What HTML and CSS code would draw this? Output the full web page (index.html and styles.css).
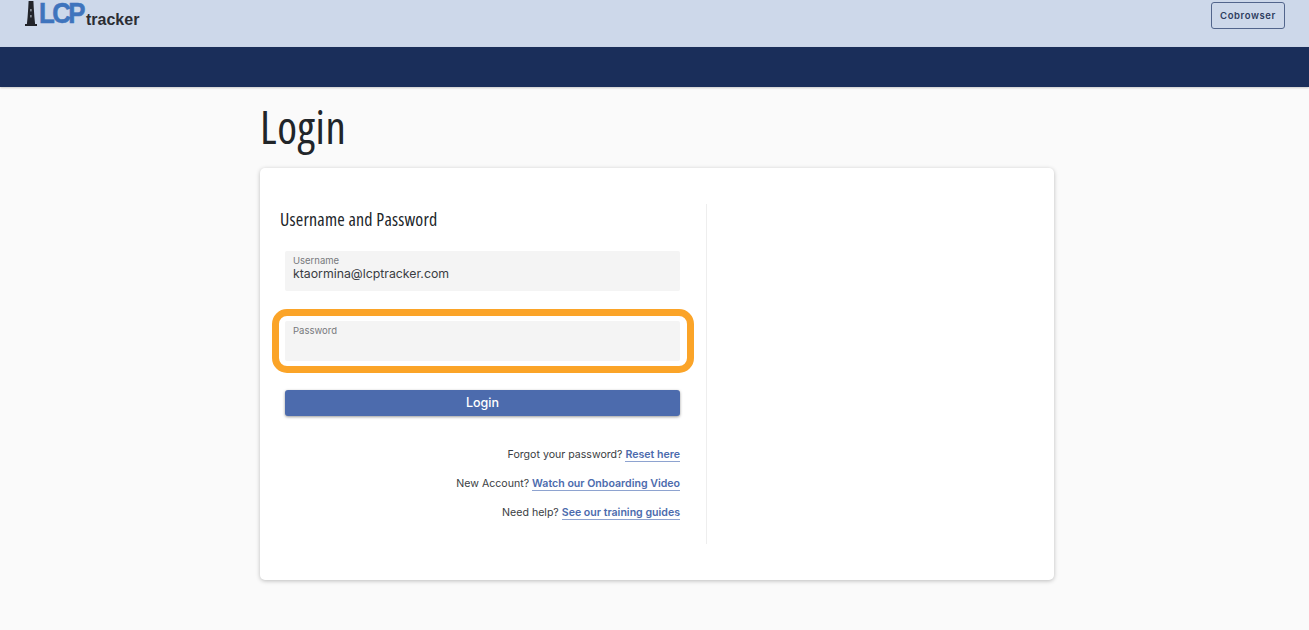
FILE: index.html
```html
<!DOCTYPE html>
<html lang="en">
<head>
  <meta charset="UTF-8" />
  <meta name="viewport" content="width=device-width, initial-scale=1.0"/>
  <title>Login</title>
  <link rel="stylesheet" href="styles.css">
</head>
<body>
  <header class="topbar">
    <div class="logo">
      <svg class="logo-tower" width="12" height="25" viewBox="0 0 12 25">
        <path d="M3.6 0h4.8l.3 6 .7 10 .7 7H12v2H0v-2h1.9l.7-7 .7-10z" fill="#22242a"/>
        <rect x="5.2" y="8" width="1.4" height="2.4" fill="#9aa0aa"/>
        <rect x="5.2" y="14" width="1.4" height="2.4" fill="#9aa0aa"/>
      </svg>
      <span class="logo-lcp">LCP</span>
      <span class="logo-tracker">tracker</span>
    </div>
    <button class="cobrowser">Cobrowser</button>
  </header>
  <div class="navbar"></div>

  <main class="page">
    <h1 class="page-title">Login</h1>
    <section class="card">
      <div class="login-col">
        <h2 class="login-heading">Username and Password</h2>
        <div class="fields">
          <div class="field">
            <label class="field-label">Username</label>
            <div class="field-value">ktaormina@lcptracker.com</div>
          </div>
          <div class="field field-marked">
            <label class="field-label">Password</label>
            <div class="field-value"></div>
            <span class="highlight"></span>
          </div>
          <button class="login-btn">Login</button>
        </div>
        <div class="help-links">
          <p>Forgot your password? <a href="#">Reset here</a></p>
          <p>New Account? <a href="#">Watch our Onboarding Video</a></p>
          <p>Need help? <a href="#">See our training guides</a></p>
        </div>
      </div>
      <div class="side-col"></div>
    </section>
  </main>
</body>
</html>
```

FILE: styles.css
```css
* {
  box-sizing: border-box;
}

body {
  margin: 0;
  height: 630px;
  overflow: hidden;
  background: #fafafa;
  font-family: Inter, "Liberation Sans", sans-serif;
  color: #33363b;
}

.topbar {
  height: 47px;
  background: #cdd8ea;
  display: flex;
  justify-content: space-between;
  align-items: flex-start;
  padding: 1px 24px 0 25px;
  overflow: hidden;
}

.logo {
  display: flex;
  align-items: flex-end;
  height: 24px;
}

.logo-tower {
  flex: none;
  margin-bottom: -1px;
}

.logo-lcp {
  margin-left: 2px;
  font-family: "Liberation Sans", sans-serif;
  font-weight: 700;
  font-size: 30px;
  line-height: 24px;
  letter-spacing: -3px;
  -webkit-text-stroke: 0.6px #3f74bd;
  color: #3f74bd;
  transform: scaleX(0.86);
  transform-origin: left center;
}

.logo-tracker {
  margin-left: -4px;
  margin-bottom: -3px;
  font-family: "Liberation Sans", sans-serif;
  font-weight: 700;
  font-size: 16px;
  line-height: 16px;
  color: #2b2d33;
}

.cobrowser {
  width: 74px;
  height: 27px;
  margin-top: 1px;
  padding: 0;
  background: transparent;
  border: 1px solid #52658c;
  border-radius: 3px;
  font-family: Inter, sans-serif;
  font-size: 9.5px;
  font-weight: 600;
  letter-spacing: 0.6px;
  color: #2d3c60;
}

.navbar {
  height: 40px;
  background: #1a2e5a;
  box-shadow: 0 1px 2px rgba(0, 0, 0, 0.2);
}

.page {
  width: 794px;
  margin-left: 260px;
}

.page-title {
  margin: 0;
  height: 81px;
  padding-top: 13px;
  font-family: "Open Sans", sans-serif;
  font-stretch: 75%;
  font-weight: 400;
  font-size: 45px;
  line-height: 54px;
  letter-spacing: 0.6px;
  color: #212529;
}

.card {
  display: flex;
  height: 412px;
  padding: 36px 20px;
  background: #fff;
  border-radius: 5px;
  box-shadow: 0 1px 4px rgba(0, 0, 0, 0.25);
}

.login-col {
  width: 427px;
  border-right: 1px solid #eee;
}

.login-heading {
  margin: 0;
  height: 47px;
  padding-top: 3px;
  font-family: "Open Sans", sans-serif;
  font-stretch: 75%;
  font-weight: 500;
  font-size: 18px;
  line-height: 24px;
  letter-spacing: 0.2px;
  color: #212529;
}

.fields {
  display: flex;
  flex-direction: column;
  gap: 30px;
  width: 395px;
  margin-left: 5px;
}

.field {
  height: 40px;
  padding: 4px 8px;
  background: #f4f4f4;
  border-radius: 2px;
}

.field-marked {
  position: relative;
}

.field-label {
  display: block;
  font-size: 9.5px;
  line-height: 12px;
  color: #77797d;
}

.field-value {
  margin-top: -2px;
  font-size: 12.3px;
  line-height: 18px;
  color: #3a3d42;
}

.highlight {
  position: absolute;
  left: -13px;
  right: -14px;
  top: -12px;
  bottom: -12px;
  border: 7px solid #fba428;
  border-radius: 15px;
}

.login-btn {
  height: 26px;
  margin-top: -1px;
  padding: 0 0 2px;
  background: #4c6bad;
  border: none;
  border-radius: 3px;
  box-shadow: 0 1px 3px rgba(0, 0, 0, 0.4);
  font-family: Inter, sans-serif;
  font-size: 12.5px;
  font-weight: 500;
  color: #fff;
}

.help-links {
  width: 395px;
  margin: 30px 0 0 5px;
  text-align: right;
  font-size: 10.6px;
  color: #3a3d42;
}

.help-links p {
  margin: 0 0 11px;
  line-height: 18px;
}

.help-links a {
  font-weight: 600;
  color: #4c6bad;
  text-decoration: none;
  border-bottom: 1px solid #8ea3d0;
}

.side-col {
  flex: 1;
}
```
